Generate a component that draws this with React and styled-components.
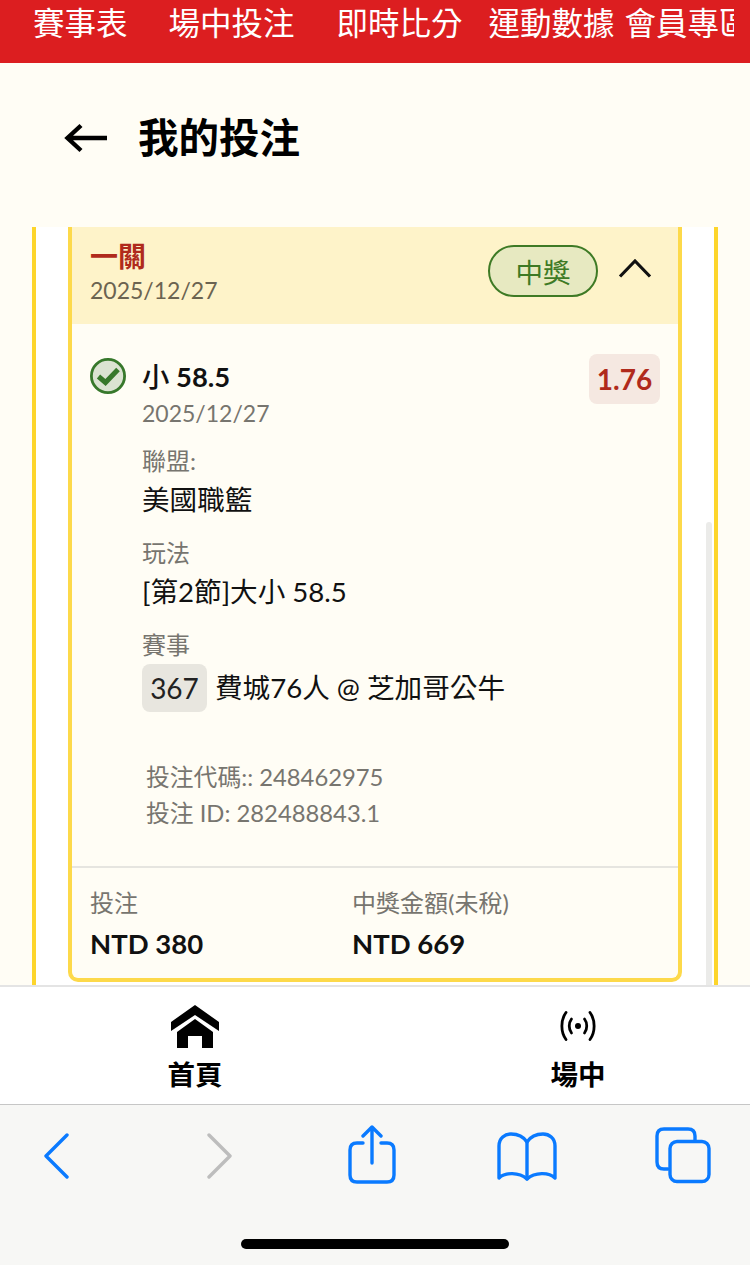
import React from "react";
import styled, { createGlobalStyle } from "styled-components";

const GlobalStyle = createGlobalStyle`
    html, body {
        margin: 0;
        padding: 0;
        background: #fffdf5;
    }
    * {
        box-sizing: border-box;
    }
`;

const FONT = `Lato, "Noto Sans CJK TC", "Noto Sans", sans-serif`;

function App() {
    return (
        <Page>
            <GlobalStyle />
            <TopNav>
                <NavItem $width={135.5}>賽事表</NavItem>
                <NavItem $width={168}>場中投注</NavItem>
                <NavItem $width={152}>即時比分</NavItem>
                <NavItem $width={136}>運動數據</NavItem>
                <NavItem $width={109}>會員專區</NavItem>
            </TopNav>

            <TitleBar>
                <svg width="44" height="30" viewBox="0 0 44 30" fill="none">
                    <path
                        d="M43 15H4M17 2.500L3.500 15L17 27.500"
                        stroke="#000"
                        strokeWidth="4.400"
                    />
                </svg>
                <Title>我的投注</Title>
            </TitleBar>

            <Panel>
                <Card>
                    <CardHeader>
                        <div>
                            <ParlayName>一關</ParlayName>
                            <HeaderDate>2025/12/27</HeaderDate>
                        </div>
                        <HeaderRight>
                            <WinBadge>中獎</WinBadge>
                            <Chevron viewBox="0 0 34 20">
                                <path d="M2 18.500L17 3L32 18.500" />
                            </Chevron>
                        </HeaderRight>
                    </CardHeader>

                    <CardBody>
                        <CheckIcon viewBox="0 0 36 36">
                            <circle cx="18" cy="18" r="16.600" fill="#dbe3d2" stroke="#37782b" strokeWidth="2.800" />
                            <path d="M8.500 18.500L15.500 24.500L28 11.500" fill="none" stroke="#37782b" strokeWidth="5" />
                        </CheckIcon>
                        <BetInfo>
                            <BetTop>
                                <div>
                                    <BetName><BetSide>小</BetSide> 58.5</BetName>
                                    <BetDate>2025/12/27</BetDate>
                                </div>
                                <Odds>1.76</Odds>
                            </BetTop>

                            <FieldLabel $top={14}>聯盟:</FieldLabel>
                            <FieldValue>美國職籃</FieldValue>
                            <FieldLabel>玩法</FieldLabel>
                            <FieldValue>[第2節]大小 58.5</FieldValue>
                            <FieldLabel>賽事</FieldLabel>
                            <MatchRow>
                                <MatchNo>367</MatchNo>
                                <MatchName>費城76人 @ 芝加哥公牛</MatchName>
                            </MatchRow>

                            <Codes>
                                <CodeLine>投注代碼:: 248462975</CodeLine>
                                <CodeLine>投注 ID: 282488843.1</CodeLine>
                            </Codes>
                        </BetInfo>
                    </CardBody>

                    <CardFooter>
                        <FooterCol>
                            <FooterLabel>投注</FooterLabel>
                            <FooterAmount>NTD 380</FooterAmount>
                        </FooterCol>
                        <FooterCol>
                            <FooterLabel>中獎金額(未稅)</FooterLabel>
                            <FooterAmount>NTD 669</FooterAmount>
                        </FooterCol>
                    </CardFooter>
                </Card>
                <ScrollThumb />
            </Panel>

            <TabBar>
                <Tab>
                    <TabIcon>
                        <svg width="48" height="43" viewBox="0 0 48 43">
                            <path d="M24 0L48 17V26L24 10L0 26V17Z" fill="#000" />
                            <path d="M24 14L42 27V43H31V31H17V43H6V27Z" fill="#000" />
                        </svg>
                    </TabIcon>
                    <TabLabel>首頁</TabLabel>
                </Tab>
                <Tab>
                    <TabIcon>
                        <svg width="38" height="30" viewBox="0 0 38 30" fill="none" stroke="#000" strokeWidth="2.800" strokeLinecap="round">
                            <circle cx="19" cy="15" r="3" fill="#000" stroke="none" />
                            <path d="M12.500 8C9.500 12 9.500 18 12.500 22" />
                            <path d="M25.500 8C28.500 12 28.500 18 25.500 22" />
                            <path d="M7 1.500C1.500 9 1.500 21 7 28.500" />
                            <path d="M31 1.500C36.500 9 36.500 21 31 28.500" />
                        </svg>
                    </TabIcon>
                    <TabLabel>場中</TabLabel>
                </Tab>
            </TabBar>

            <BrowserBar>
                <BrowserIcons>
                    <BrowserIcon $top={28} width="28" height="46" viewBox="0 0 28 46">
                        <path d="M24 2L3 23L24 44" />
                    </BrowserIcon>
                    <BrowserIcon $off $left={134} $top={28} width="28" height="46" viewBox="0 0 28 46">
                        <path d="M4 2L25 23L4 44" />
                    </BrowserIcon>
                    <BrowserIcon $left={115} $top={20} width="48" height="60" viewBox="0 0 48 60">
                        <path d="M15 18H9C4.500 18 2 20.500 2 25V50C2 54.500 4.500 57 9 57H39C43.500 57 46 54.500 46 50V25C46 20.500 43.500 18 39 18H33" />
                        <path d="M24 38V2M15 11L24 2L33 11" />
                    </BrowserIcon>
                    <BrowserIcon $left={101} $top={27} width="60" height="50" viewBox="0 0 60 50">
                        <path d="M30 10C26 4 21 2 14 2C8 2 2 6 2 14V46C8 40 22 40 30 47C38 40 52 40 58 46V14C58 6 52 2 46 2C39 2 34 4 30 10Z" />
                        <path d="M30 10V47" />
                    </BrowserIcon>
                    <BrowserIcon $left={98} $top={22} width="56" height="58" viewBox="0 0 56 58">
                        <path d="M13 42H9C4.500 42 2 39.500 2 35V9C2 4.500 4.500 2 9 2H33C37.500 2 40 4.500 40 9V14" />
                        <rect x="15" y="14.500" width="39" height="40" rx="7" />
                    </BrowserIcon>
                </BrowserIcons>
                <HomeIndicator />
            </BrowserBar>
        </Page>
    );
}

export default App;

const Page = styled.div`
    width: 750px;
    height: 1265px;
    display: flex;
    flex-direction: column;
    overflow: hidden;
    background: #fffdf5;
    font-family: ${FONT};
`;
const TopNav = styled.div`
    height: 63px;
    flex-shrink: 0;
    padding: 0 15px 0 33px;
    display: flex;
    overflow: hidden;
    background: #dc1e20;
`;
const NavItem = styled.div`
    width: ${(p) => p.$width}px;
    flex-shrink: 0;
    overflow: hidden;
    white-space: nowrap;
    color: #fff;
    font-size: 31.5px;
    line-height: 46px;
`;
const TitleBar = styled.div`
    height: 164px;
    flex-shrink: 0;
    padding: 0 0 15px 64px;
    display: flex;
    align-items: center;
    gap: 30px;
`;
const Title = styled.h1`
    margin: 0;
    font-size: 40.5px;
    font-weight: 700;
    line-height: 50px;
    color: #000;
`;
const Panel = styled.div`
    position: relative;
    height: 758px;
    flex-shrink: 0;
    margin: 0 32px;
    padding: 0 32px;
    background: #fff;
    border-left: 4px solid #fdd52b;
    border-right: 4px solid #fdd52b;
`;
const ScrollThumb = styled.div`
    position: absolute;
    right: 2px;
    top: 295px;
    bottom: 0;
    width: 6px;
    border-radius: 3px 3px 0 0;
    background: #ebebe9;
`;
const Card = styled.div`
    height: 755px;
    display: flex;
    flex-direction: column;
    background: #fffdf5;
    border: 4px solid #fdd94a;
    border-top: none;
    border-radius: 0 0 10px 10px;
`;
const CardHeader = styled.div`
    height: 97px;
    flex-shrink: 0;
    padding: 12px 26px 0 18px;
    display: flex;
    justify-content: space-between;
    background: #fef3c9;
`;
const ParlayName = styled.div`
    font-size: 28px;
    font-weight: 700;
    line-height: 34px;
    color: #b02a1c;
`;
const HeaderDate = styled.div`
    font-size: 23px;
    line-height: 34px;
    color: #6b6351;
`;
const HeaderRight = styled.div`
    height: 64px;
    display: flex;
    align-items: center;
    gap: 20px;
`;
const WinBadge = styled.div`
    width: 110px;
    height: 52px;
    display: flex;
    align-items: center;
    justify-content: center;
    border: 2px solid #3e7a25;
    border-radius: 26px;
    background: #e7e9c1;
    color: #3e7a25;
    font-size: 27.5px;
`;
const Chevron = styled.svg`
    width: 34px;
    height: 20px;
    margin-bottom: 6px;
    fill: none;
    stroke: #111;
    stroke-width: 3.2;
`;
const CardBody = styled.div`
    flex: 1;
    padding: 34px 18px 0;
    display: flex;
    gap: 16px;
    border-bottom: 2px solid #e6e5e0;
`;
const CheckIcon = styled.svg`
    width: 36px;
    height: 36px;
    flex-shrink: 0;
`;
const BetInfo = styled.div`
    flex: 1;
`;
const BetTop = styled.div`
    display: flex;
    justify-content: space-between;
    align-items: flex-start;
`;
const BetName = styled.div`
    font-size: 27.4px;
    font-weight: 700;
    line-height: 38px;
    color: #111;
`;
const BetSide = styled.span`
    font-weight: 500;
`;
const BetDate = styled.div`
    font-size: 23px;
    line-height: 34px;
    color: #77756f;
`;
const Odds = styled.div`
    width: 71px;
    height: 50px;
    margin-top: -4px;
    display: flex;
    align-items: center;
    justify-content: center;
    border-radius: 8px;
    background: #f5e8e1;
    color: #b02a1c;
    font-size: 28px;
    font-weight: 700;
`;
const FieldLabel = styled.div`
    margin-top: ${(p) => p.$top || 16}px;
    font-size: 24px;
    line-height: 34px;
    color: #77756f;
`;
const FieldValue = styled.div`
    margin-top: 2px;
    font-size: 27.6px;
    line-height: 40px;
    color: #111;
`;
const MatchRow = styled.div`
    margin-top: 2px;
    display: flex;
    align-items: center;
    gap: 8px;
`;
const MatchNo = styled.div`
    width: 65px;
    height: 48px;
    display: flex;
    align-items: center;
    justify-content: center;
    border-radius: 8px;
    background: #e8e6df;
    font-size: 28px;
    color: #222;
`;
const MatchName = styled.div`
    font-size: 27.6px;
    line-height: 40px;
    color: #111;
`;
const Codes = styled.div`
    margin: 47px 0 0 4px;
`;
const CodeLine = styled.div`
    font-size: 23.8px;
    line-height: 36px;
    color: #77756f;
`;
const CardFooter = styled.div`
    height: 110px;
    flex-shrink: 0;
    padding: 17px 18px 0;
    display: flex;
`;
const FooterCol = styled.div`
    width: 262px;
`;
const FooterLabel = styled.div`
    font-size: 24px;
    line-height: 36px;
    color: #77756f;
`;
const FooterAmount = styled.div`
    font-size: 27.5px;
    font-weight: 700;
    line-height: 40px;
    margin-top: 3px;
    color: #111;
`;
const TabBar = styled.div`
    height: 119px;
    flex-shrink: 0;
    display: grid;
    grid-template-columns: 390px 344px;
    column-gap: 16px;
    background: #fff;
    border-top: 2px solid #e4e4e4;
`;
const Tab = styled.div`
    display: flex;
    flex-direction: column;
    align-items: center;
    padding-top: 17px;
`;
const TabIcon = styled.div`
    height: 44px;
    display: flex;
    align-items: center;
    justify-content: center;
`;
const TabLabel = styled.div`
    margin-top: 9px;
    font-size: 27.5px;
    font-weight: 700;
    line-height: 36px;
    color: #000;
`;
const BrowserBar = styled.div`
    flex: 1;
    position: relative;
    background: #f7f7f5;
    border-top: 1px solid #c6c6c6;
`;
const BrowserIcons = styled.div`
    padding-left: 43px;
    display: flex;
    align-items: flex-start;
`;
const BrowserIcon = styled.svg`
    flex-shrink: 0;
    margin-left: ${(p) => p.$left || 0}px;
    margin-top: ${(p) => p.$top}px;
    fill: none;
    stroke: ${(p) => (p.$off ? "#bdbdbd" : "#0a7aff")};
    stroke-width: 3.4;
    stroke-linecap: round;
    stroke-linejoin: round;
`;
const HomeIndicator = styled.div`
    position: absolute;
    left: 241px;
    bottom: 16px;
    width: 268px;
    height: 10px;
    border-radius: 5px;
    background: #000;
`;
